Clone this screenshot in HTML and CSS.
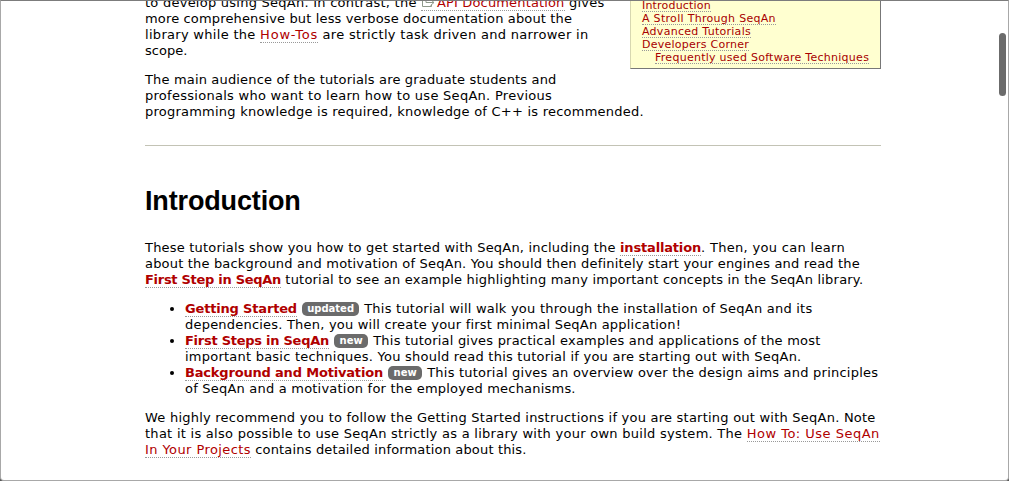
FILE: index.html
```
<!DOCTYPE html>
<html lang="en">
<head>
<meta charset="utf-8">
<title>SeqAn Tutorials</title>
<link rel="stylesheet" href="styles.css">
</head>
<body>
<div class="window">
  <main class="wiki">
    <nav class="toc">
      <ul>
        <li><a class="s20" href="#">Introduction</a></li>
        <li><a class="s30" href="#">A Stroll Through SeqAn</a></li>
        <li><a class="s28" href="#">Advanced Tutorials</a></li>
        <li><a class="s25" href="#">Developers Corner</a></li>
        <li class="sub"><a class="s27" href="#">Frequently used Software Techniques</a></li>
      </ul>
    </nav>
    <p><span class="s25">to develop using SeqAn. In contrast, the </span><a class="s15" href="#"><svg class="ext" viewBox="0 0 16 10" width="16" height="10"><path d="M5 2.500H1.500V8.500H10.500V7M5 2.500V4.500H13M9.500 1.500L13 4.500L9.500 7.500" fill="none" stroke="#8f998b"/></svg>API Documentation</a><span class="s25"> gives</span><br>
    <span class="s15">more comprehensive but less verbose documentation about the</span><br>
    <span class="s30">library while the </span><a class="s81" href="#">How-Tos</a><span class="s32"> are strictly task driven and narrower in</span><br>
    <span class="s05">scope.</span></p>
    <p><span class="s16">The main audience of the tutorials are graduate students and</span><br>
    <span class="s28">professionals who want to learn how to use SeqAn. Previous</span><br>
    <span class="s23">programming knowledge is required, knowledge of C++ is recommended.</span></p>
    <hr>
    <h1>Introduction</h1>
    <p><span class="s20">These tutorials show you how to get started with SeqAn, including the </span><a class="n16" href="#">installation</a><span class="s32">. Then, you can learn</span><br>
    <span class="s18">about the background and motivation of SeqAn. You should then definitely start your engines and read the</span><br>
    <a class="n29" href="#">First Step in SeqAn</a><span class="s21"> tutorial to see an example highlighting many important concepts in the SeqAn library.</span></p>
    <ul class="tutorials">
      <li><a class="n17" href="#">Getting Started</a> <span class="badge">updated</span> <span class="s23">This tutorial will walk you through the installation of SeqAn and its</span><br>
      <span class="s21">dependencies. Then, you will create your first minimal SeqAn application!</span></li>
      <li><a class="n26" href="#">First Steps in SeqAn</a> <span class="badge new">new</span> <span class="s21">This tutorial gives practical examples and applications of the most</span><br>
      <span class="s23">important basic techniques. You should read this tutorial if you are starting out with SeqAn.</span></li>
      <li><a class="n18" href="#">Background and Motivation</a> <span class="badge new">new</span> <span class="s22">This tutorial gives an overview over the design aims and principles</span><br>
      <span class="s21">of SeqAn and a motivation for the employed mechanisms.</span></li>
    </ul>
    <p><span class="s23">We highly recommend you to follow the Getting Started instructions if you are starting out with SeqAn. Note</span><br>
    <span class="s27">that it is also possible to use SeqAn strictly as a library with your own build system. The </span><a class="s49" href="#">How To: Use SeqAn</a><br>
    <a class="s42" href="#">In Your Projects</a><span class="s16"> contains detailed information about this.</span></p>
  </main>
  <div class="scrollbar"></div>
</div>
</body>
</html>
```
FILE: styles.css
```
* { box-sizing: border-box; }
html { background: #555; }
body { margin: 0; overflow: hidden; }
.window {
  position: relative;
  height: 481px;
  overflow: hidden;
  background: #fff;
  border: 1px solid #a8a8a8;
  border-top-color: #7c7c7c;
  border-radius: 0 0 4px 4px;
}
.wiki {
  width: 736px;
  margin: -6px 0 0 144px;
  font: 13px/16px "DejaVu Sans", Verdana, sans-serif;
  color: #000;
  white-space: nowrap;
}
p { margin: 0 0 13px; }
a {
  color: #b00000;
  text-decoration: none;
  border-bottom: 1px dotted #999;
}
.ext { vertical-align: -1px; }
.toc {
  float: right;
  width: 251px;
  height: 74px;
  padding: 3px 0 0 11px;
  background: #ffffd0;
  border: 1px solid #d7d7b0;
  border-right-color: #777;
  border-bottom-color: #777;
  font-size: 11px;
  line-height: 13px;
}
.toc ul { margin: 0; padding: 0; list-style: none; }
.toc .sub { padding-left: 13px; }
.toc a { display: inline-block; height: 13px; line-height: 13px; vertical-align: top; color: #a80000; }
hr {
  height: 1px;
  margin: 25px 0 39px;
  border: 0;
  background: #c3c3b5;
}
h1 {
  margin: 0 0 23px;
  font: bold 27px/32px "Liberation Sans", Arial, sans-serif;
  letter-spacing: -0.15px;
}
.tutorials { margin: 0 0 13px; padding: 0 0 0 40px; }
.badge {
  display: inline-block;
  height: 14px;
  padding: 0 5px;
  border-radius: 5px;
  background: #6b6b6b;
  color: #fff;
  font-size: 10px;
  font-weight: bold;
  line-height: 14px;
  vertical-align: top;
  margin: 1px 1px 0 1px;
}
.badge.new { padding: 0 5.4px; }
/* Tracking steps: s widens, n narrows and sets bold */
.s05 { letter-spacing: .04px; }
.s15 { letter-spacing: .15px; }
.s16 { letter-spacing: .16px; }
.s18 { letter-spacing: .183px; }
.s20 { letter-spacing: .195px; }
.s21 { letter-spacing: .21px; }
.s22 { letter-spacing: .223px; }
.s23 { letter-spacing: .23px; }
.s25 { letter-spacing: .25px; }
.s27 { letter-spacing: .27px; }
.s28 { letter-spacing: .276px; }
.s30 { letter-spacing: .3px; }
.s32 { letter-spacing: .317px; }
.s42 { letter-spacing: .416px; }
.s49 { letter-spacing: .486px; }
.s81 { letter-spacing: .812px; }
.n16, .n17, .n18, .n26, .n29 { font-weight: bold; }
.n16 { letter-spacing: -.165px; }
.n17 { letter-spacing: -.17px; }
.n18 { letter-spacing: -.181px; }
.n26 { letter-spacing: -.261px; }
.n29 { letter-spacing: -.289px; }
.scrollbar {
  position: absolute;
  top: 32px;
  right: 2px;
  width: 7px;
  height: 63px;
  border-radius: 4px;
  background: #6b6b6b;
}
```
